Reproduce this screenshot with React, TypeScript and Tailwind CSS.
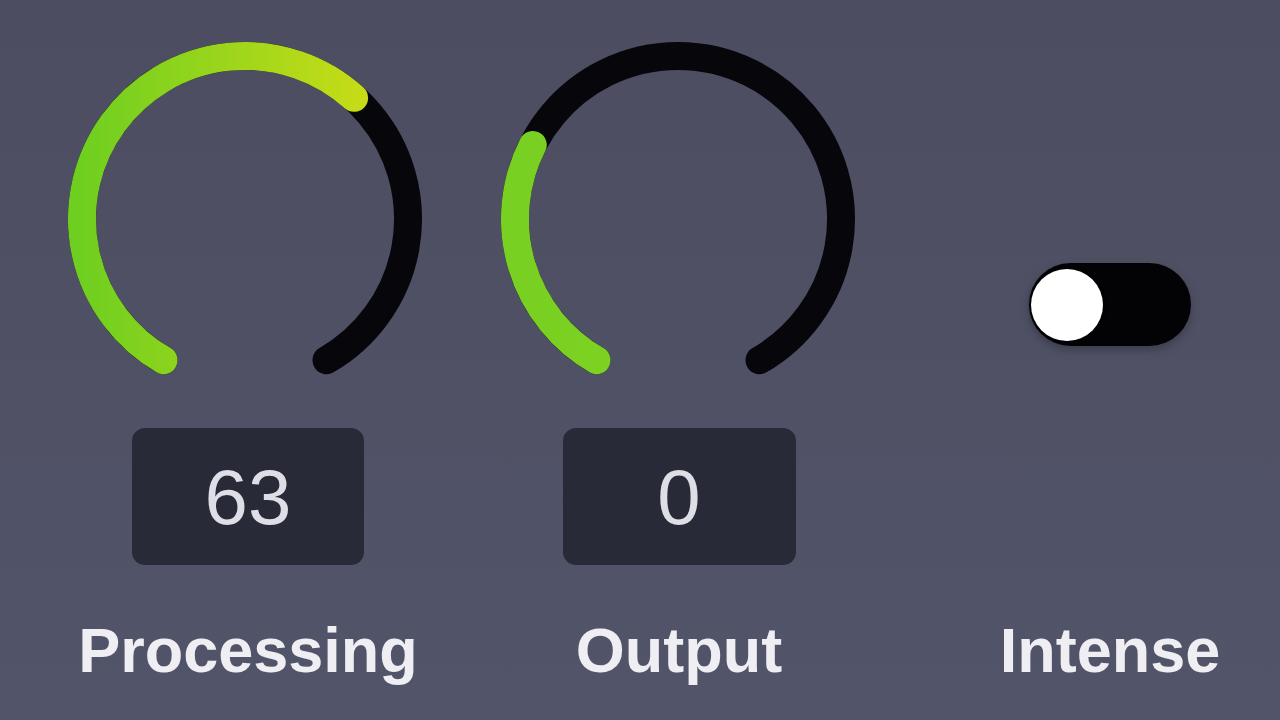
import React from "react";

function pt(cx: number, cy: number, r: number, deg: number) {
  const a = (deg * Math.PI) / 180;
  return [cx + r * Math.sin(a), cy - r * Math.cos(a)];
}

function arc(cx: number, cy: number, r: number, a0: number, a1: number) {
  const [x0, y0] = pt(cx, cy, r, a0);
  const [x1, y1] = pt(cx, cy, r, a1);
  const large = a1 - a0 > 180 ? 1 : 0;
  return `M ${x0} ${y0} A ${r} ${r} 0 ${large} 1 ${x1} ${y1}`;
}

function Knob({ frac, id, grad, dx }: { frac: number; id: string; grad: [string, string]; dx: number }) {
  const cx = 180 + dx;
  const cy = 180;
  const r = 163;
  const start = -150;
  const end = 150;
  const valEnd = start + frac * (end - start);
  return (
    <svg width="360" height="360" viewBox="0 0 360 360" className="overflow-visible">
      <defs>
        <linearGradient id={id} gradientUnits="userSpaceOnUse" x1={cx - r} y1="0" x2={cx + r * 0.75} y2="0">
          <stop offset="0" stopColor={grad[0]} />
          <stop offset="1" stopColor={grad[1]} />
        </linearGradient>
      </defs>
      <path d={arc(cx, cy, r, start, end)} fill="none" stroke="#07070b" strokeWidth="28" strokeLinecap="round" />
      <path d={arc(cx, cy, r, start, valEnd)} fill="none" stroke={`url(#${id})`} strokeWidth="28" strokeLinecap="round" />
    </svg>
  );
}

const labelCls =
  "text-[63px] leading-[63px] font-bold text-[#eeeef3] mt-[54px] whitespace-nowrap";
const font = { fontFamily: '"Liberation Sans", Arial, sans-serif' };

export default function App() {
  return (
    <div
      className="w-[1280px] h-[720px] overflow-hidden bg-gradient-to-b from-[#4c4d61] to-[#525469] flex gap-[71px] pl-[68px] pt-[39px]"
      style={font}
    >
      <div className="w-[360px] shrink-0 flex flex-col items-center">
        <Knob frac={0.64} id="g1" grad={["#6fcf20", "#c8dc17"]} dx={-3} />
        <div className="mt-[29px] w-[232px] h-[137px] rounded-[13px] bg-[#292a37] flex items-center justify-center text-[78px] leading-none text-[#dedee6]">
          63
        </div>
        <div className={labelCls}>Processing</div>
      </div>
      <div className="w-[360px] shrink-0 flex flex-col items-center">
        <Knob frac={0.29} id="g2" grad={["#78d022", "#88d31f"]} dx={-1} />
        <div className="mt-[29px] w-[233px] h-[137px] rounded-[13px] bg-[#292a37] flex items-center justify-center text-[78px] leading-none text-[#dedee6]">
          0
        </div>
        <div className={labelCls}>Output</div>
      </div>
      <div className="w-[360px] shrink-0 flex flex-col items-center">
        <div className="h-[360px] pt-[224px]">
          <div className="w-[162px] h-[83px] rounded-full bg-[#030305] flex items-center pl-[2px] shadow-[0_4px_10px_rgba(0,0,0,0.25)]">
            <div className="w-[72px] h-[72px] rounded-full bg-white shadow-[0_0_4px_rgba(0,0,0,0.5)]" />
          </div>
        </div>
        <div className="mt-[29px] h-[137px]" />
        <div className={labelCls}>Intense</div>
      </div>
    </div>
  );
}
